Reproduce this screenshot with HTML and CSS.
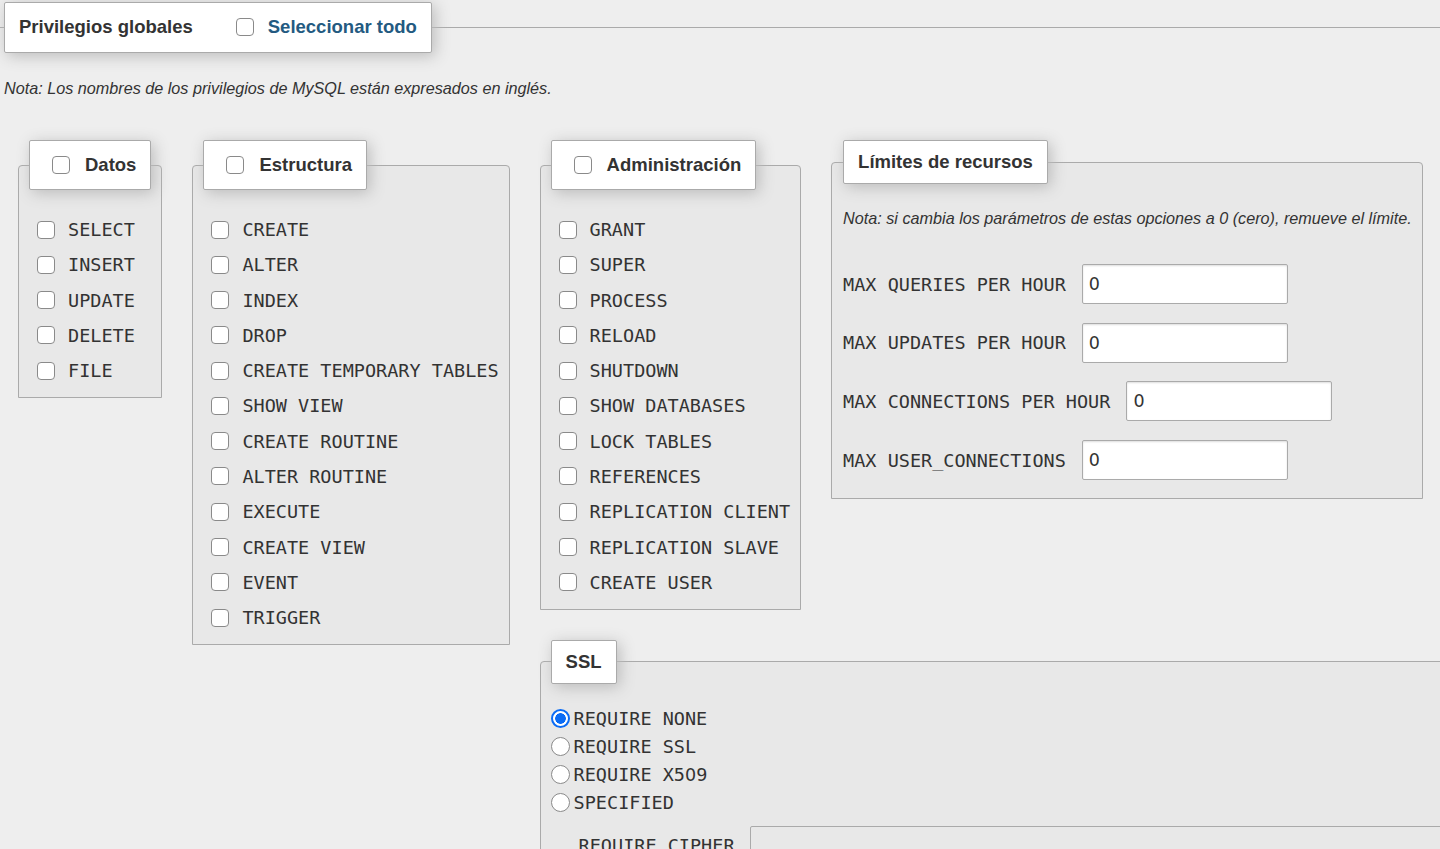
FILE: index.html
```html
<!DOCTYPE html>
<html lang="es">
<head>
<meta charset="utf-8">
<title>Privilegios globales</title>
<link rel="stylesheet" href="styles.css">
</head>
<body>
<fieldset class="outer">
  <legend class="lg lg-cb"><span class="lg-in"><span>Privilegios globales</span><input type="checkbox" class="cb cb-all" id="checkall"><label for="checkall" class="link">Seleccionar todo</label></span></legend>
  <p class="note">Nota: Los nombres de los privilegios de MySQL están expresados en inglés.</p>
  <div class="groups">
    <fieldset class="fs">
      <legend class="lg lg-cb"><span class="lg-in"><input type="checkbox" class="cb cb-lg"><span>Datos</span></span></legend>
      <div class="item"><input type="checkbox" class="cb" id="p1"><label for="p1" class="code">SELECT</label></div>
      <div class="item"><input type="checkbox" class="cb" id="p2"><label for="p2" class="code">INSERT</label></div>
      <div class="item"><input type="checkbox" class="cb" id="p3"><label for="p3" class="code">UPDATE</label></div>
      <div class="item"><input type="checkbox" class="cb" id="p4"><label for="p4" class="code">DELETE</label></div>
      <div class="item"><input type="checkbox" class="cb" id="p5"><label for="p5" class="code">FILE</label></div>
    </fieldset>
    <fieldset class="fs">
      <legend class="lg lg-cb"><span class="lg-in"><input type="checkbox" class="cb cb-lg"><span>Estructura</span></span></legend>
      <div class="item"><input type="checkbox" class="cb" id="s1"><label for="s1" class="code">CREATE</label></div>
      <div class="item"><input type="checkbox" class="cb" id="s2"><label for="s2" class="code">ALTER</label></div>
      <div class="item"><input type="checkbox" class="cb" id="s3"><label for="s3" class="code">INDEX</label></div>
      <div class="item"><input type="checkbox" class="cb" id="s4"><label for="s4" class="code">DROP</label></div>
      <div class="item"><input type="checkbox" class="cb" id="s5"><label for="s5" class="code">CREATE TEMPORARY TABLES</label></div>
      <div class="item"><input type="checkbox" class="cb" id="s6"><label for="s6" class="code">SHOW VIEW</label></div>
      <div class="item"><input type="checkbox" class="cb" id="s7"><label for="s7" class="code">CREATE ROUTINE</label></div>
      <div class="item"><input type="checkbox" class="cb" id="s8"><label for="s8" class="code">ALTER ROUTINE</label></div>
      <div class="item"><input type="checkbox" class="cb" id="s9"><label for="s9" class="code">EXECUTE</label></div>
      <div class="item"><input type="checkbox" class="cb" id="s10"><label for="s10" class="code">CREATE VIEW</label></div>
      <div class="item"><input type="checkbox" class="cb" id="s11"><label for="s11" class="code">EVENT</label></div>
      <div class="item"><input type="checkbox" class="cb" id="s12"><label for="s12" class="code">TRIGGER</label></div>
    </fieldset>
    <div class="col">
      <div class="row">
        <fieldset class="fs">
          <legend class="lg lg-cb"><span class="lg-in"><input type="checkbox" class="cb cb-lg"><span>Administración</span></span></legend>
          <div class="item"><input type="checkbox" class="cb" id="a1"><label for="a1" class="code">GRANT</label></div>
          <div class="item"><input type="checkbox" class="cb" id="a2"><label for="a2" class="code">SUPER</label></div>
          <div class="item"><input type="checkbox" class="cb" id="a3"><label for="a3" class="code">PROCESS</label></div>
          <div class="item"><input type="checkbox" class="cb" id="a4"><label for="a4" class="code">RELOAD</label></div>
          <div class="item"><input type="checkbox" class="cb" id="a5"><label for="a5" class="code">SHUTDOWN</label></div>
          <div class="item"><input type="checkbox" class="cb" id="a6"><label for="a6" class="code">SHOW DATABASES</label></div>
          <div class="item"><input type="checkbox" class="cb" id="a7"><label for="a7" class="code">LOCK TABLES</label></div>
          <div class="item"><input type="checkbox" class="cb" id="a8"><label for="a8" class="code">REFERENCES</label></div>
          <div class="item"><input type="checkbox" class="cb" id="a9"><label for="a9" class="code">REPLICATION CLIENT</label></div>
          <div class="item"><input type="checkbox" class="cb" id="a10"><label for="a10" class="code">REPLICATION SLAVE</label></div>
          <div class="item"><input type="checkbox" class="cb" id="a11"><label for="a11" class="code">CREATE USER</label></div>
        </fieldset>
        <fieldset class="fs limits">
          <legend class="lg">Límites de recursos</legend>
          <p class="lnote">Nota: si cambia los parámetros de estas opciones a 0 (cero), remueve el límite.</p>
          <div class="lim-row"><label class="code" for="l1">MAX QUERIES PER HOUR</label><input class="num" id="l1" type="text" value="0"></div>
          <div class="lim-row"><label class="code" for="l2">MAX UPDATES PER HOUR</label><input class="num" id="l2" type="text" value="0"></div>
          <div class="lim-row"><label class="code" for="l3">MAX CONNECTIONS PER HOUR</label><input class="num" id="l3" type="text" value="0"></div>
          <div class="lim-row"><label class="code" for="l4">MAX USER_CONNECTIONS</label><input class="num" id="l4" type="text" value="0"></div>
        </fieldset>
      </div>
      <fieldset class="fs ssl">
        <legend class="lg">SSL</legend>
        <div class="radio"><input type="radio" name="ssl" class="rd" id="r1" checked><label for="r1" class="code">REQUIRE NONE</label></div>
        <div class="radio"><input type="radio" name="ssl" class="rd" id="r2"><label for="r2" class="code">REQUIRE SSL</label></div>
        <div class="radio"><input type="radio" name="ssl" class="rd" id="r3"><label for="r3" class="code">REQUIRE X5<span class="zero">0</span>9</label></div>
        <div class="radio"><input type="radio" name="ssl" class="rd" id="r4"><label for="r4" class="code">SPECIFIED</label></div>
        <div class="cipher"><label for="c1" class="code">REQUIRE CIPHER</label><input type="text" class="txt" id="c1" disabled></div>
      </fieldset>
    </div>
  </div>
</fieldset>
</body>
</html>
```
FILE: styles.css
```css
html, body {
  margin: 0;
  padding: 0;
}

body {
  background: #eeeeee;
  font-family: "Liberation Sans", Arial, sans-serif;
  color: #333;
  overflow: hidden;
  width: 1440px;
  height: 849px;
}

.outer {
  margin: 2px 0 0 0;
  padding: 0 0 40px 4px;
  border: 1px solid #aaa;
  border-left: 0;
  border-right: 0;
  background: #eeeeee;
}

.lg {
  font-weight: bold;
  font-size: 18.5px;
  line-height: 22px;
  color: #333;
  padding: 10px 14px;
  border: 1px solid #aaa;
  border-radius: 2px;
  background: #fff;
  box-shadow: 3px 3px 15px #bbb;
  white-space: nowrap;
}

.lg-cb {
  padding: 13px 14px 13px;
}

.outer > .lg-cb {
  padding-bottom: 14px;
}

.lg-in {
  display: flex;
  align-items: center;
  white-space: nowrap;
}

.cb {
  -webkit-appearance: none;
  appearance: none;
  box-sizing: border-box;
  width: 18px;
  height: 18px;
  margin: 0;
  border: 1px solid #8a8a8a;
  border-radius: 4px;
  background: #fff;
  flex: none;
}

.cb-lg {
  margin: 0 15px 0 8px;
}

.cb-all {
  margin: 0 14px 0 43px;
}

.link {
  color: #235a81;
  cursor: pointer;
}

.note {
  margin: 26px 0 27px;
  font-style: italic;
  font-size: 16.2px;
  line-height: 19px;
  white-space: nowrap;
  color: #333;
}

.groups {
  display: flex;
  align-items: flex-start;
  margin-left: -1px;
}

.fs {
  margin: 15px;
  padding: 22px 10px 9px;
  border: 1px solid #aaa;
  border-radius: 4px 4px 0 0;
  background: #e8e8e8;
  flex: none;
}

.item {
  display: flex;
  align-items: center;
  height: 35.27px;
}

.item .cb {
  margin: 0 13px 0 8px;
}

.code {
  font-family: "DejaVu Sans Mono", monospace;
  font-size: 18.5px;
  color: #333;
  white-space: nowrap;
}

.zero {
  font-family: "DejaVu Sans", sans-serif;
  font-size: 17.5px;
}

.col {
  display: flex;
  flex-direction: column;
  align-items: flex-start;
  flex: none;
}

.row {
  display: flex;
  align-items: flex-start;
}

.limits {
  padding: 0 10px 18px 11px;
}

.lnote {
  margin: 25px 0 36px;
  font-style: italic;
  font-size: 16.2px;
  line-height: 19px;
  white-space: nowrap;
  color: #333;
}

.lim-row {
  display: flex;
  align-items: center;
  height: 40px;
  margin-bottom: 18.7px;
}

.lim-row:last-child {
  margin-bottom: 0;
}

.num {
  box-sizing: border-box;
  width: 206px;
  height: 40px;
  margin: 0 0 0 16px;
  padding: 0 6px;
  border: 1px solid #aaa;
  border-radius: 2px;
  background: #fff;
  box-shadow: inset 0 1px 2px #ddd;
  font-family: "DejaVu Sans", sans-serif;
  font-size: 17.5px;
  color: #333;
}

.ssl {
  padding: 21px 10px 20px;
}

.radio {
  display: flex;
  align-items: center;
  height: 28px;
}

.rd {
  -webkit-appearance: none;
  appearance: none;
  box-sizing: border-box;
  width: 19px;
  height: 19px;
  margin: 0 4px 0 0;
  border: 1px solid #8a8a8a;
  border-radius: 50%;
  background: #fff;
  flex: none;
}

.rd:checked {
  border: 2px solid #0b6cf5;
  background: radial-gradient(circle, #0b6cf5 0 5px, #fff 5.6px);
}

.cipher {
  display: flex;
  align-items: center;
  padding-left: 28px;
  margin-top: 9px;
}

.txt {
  box-sizing: border-box;
  width: 900px;
  height: 40px;
  margin: 0 0 0 15px;
  border: 1px solid #aaa;
  border-radius: 2px;
  background: #e8e8e8;
  font-family: "DejaVu Sans Mono", monospace;
  font-size: 18.5px;
}
```
